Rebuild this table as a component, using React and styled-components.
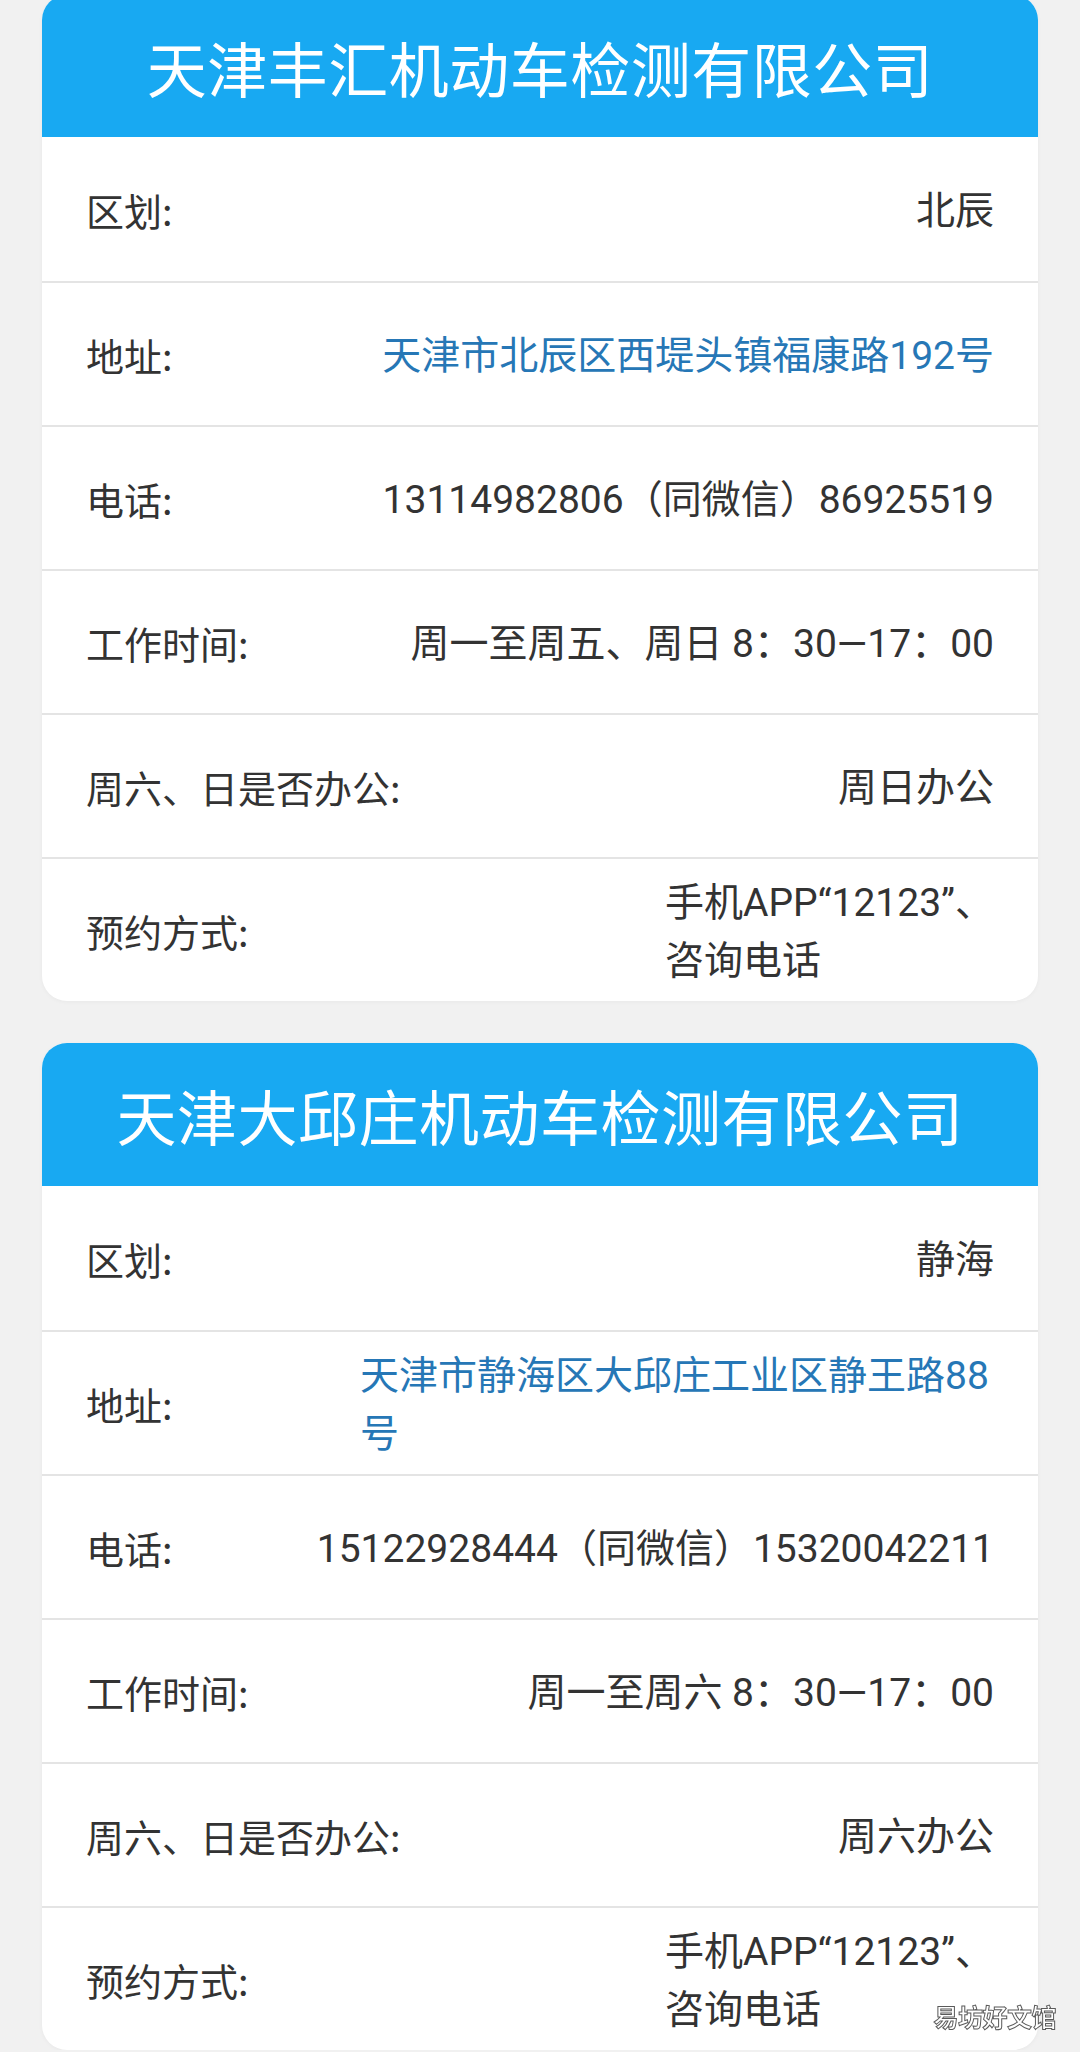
import React from "react";
import styled, { createGlobalStyle } from "styled-components";

const GlobalStyle = createGlobalStyle`
  html, body {
    margin: 0;
    padding: 0;
    background: #f1f1f1;
  }
  body {
    font-family: "Noto Sans CJK SC", "Noto Sans", sans-serif;
  }
`;

const Page = styled.div`
  display: flex;
  flex-direction: column;
  gap: 42px;
  padding: 0 42px;
  margin-top: -5px;
`;

const Card = styled.section`
  background: #ffffff;
  border-radius: 25px;
  overflow: hidden;
  box-shadow: 0 1px 4px rgba(0, 0, 0, 0.04);
`;

const Header = styled.h2`
  margin: 0;
  height: ${(p) => p.$h}px;
  display: flex;
  align-items: center;
  justify-content: center;
  background: #18a9f2;
  color: #ffffff;
  font-size: 60px;
  font-weight: 400;
  letter-spacing: 0.5px;
  box-sizing: border-box;
`;

const Row = styled.div`
  box-sizing: border-box;
  min-height: 144px;
  display: flex;
  align-items: center;
  justify-content: space-between;
  gap: 20px;
  padding: 0 44px;
  font-size: 38px;
  color: #333333;
  & + & {
    border-top: 2px solid #e4e4e4;
  }
`;

const Label = styled.span`
  flex-shrink: 0;
  white-space: nowrap;
`;

const Value = styled.span`
  max-width: ${(p) => (p.$nowrap ? "none" : "634px")};
  padding-top: 3px;
  text-align: left;
  line-height: 58px;
  font-family: Roboto, "Noto Sans CJK SC", sans-serif;
  font-size: 39px;
  white-space: ${(p) => (p.$nowrap ? "nowrap" : "normal")};
  color: ${(p) => (p.$link ? "#2677b6" : "#333333")};
`;

const Watermark = styled.div`
  position: fixed;
  right: 24px;
  bottom: 18px;
  font-size: 25px;
  font-weight: 700;
  color: #ffffff;
  -webkit-text-stroke: 1px #5a5a5a;
  letter-spacing: -0.5px;
`;

const cards = [
  {
    title: "天津丰汇机动车检测有限公司",
    h: 142,
    rows: [
      { label: "区划:", value: "北辰" },
      { label: "地址:", value: "天津市北辰区西堤头镇福康路192号", link: true },
      { label: "电话:", value: "13114982806（同微信）86925519", nowrap: true },
      { label: "工作时间:", value: "周一至周五、周日 8：30—17：00", nowrap: true },
      { label: "周六、日是否办公:", value: "周日办公" },
      { label: "预约方式:", value: ["手机APP“12123”、", "咨询电话"] },
    ],
  },
  {
    title: "天津大邱庄机动车检测有限公司",
    h: 143,
    rows: [
      { label: "区划:", value: "静海" },
      { label: "地址:", value: "天津市静海区大邱庄工业区静王路88号", link: true },
      { label: "电话:", value: "15122928444（同微信）15320042211", nowrap: true },
      { label: "工作时间:", value: "周一至周六 8：30—17：00", nowrap: true },
      { label: "周六、日是否办公:", value: "周六办公" },
      { label: "预约方式:", value: ["手机APP“12123”、", "咨询电话"] },
    ],
  },
];

export default function App() {
  return (
    <>
      <GlobalStyle />
      <Page>
        {cards.map((c) => (
          <Card key={c.title}>
            <Header $h={c.h}>{c.title}</Header>
            {c.rows.map((r) => (
              <Row key={r.label}>
                <Label>{r.label}</Label>
                <Value $link={r.link} $nowrap={r.nowrap}>
                  {Array.isArray(r.value)
                    ? r.value.map((v, i) => (
                        <React.Fragment key={i}>
                          {i > 0 && <br />}
                          {v}
                        </React.Fragment>
                      ))
                    : r.value}
                </Value>
              </Row>
            ))}
          </Card>
        ))}
      </Page>
      <Watermark>易坊好文馆</Watermark>
    </>
  );
}
